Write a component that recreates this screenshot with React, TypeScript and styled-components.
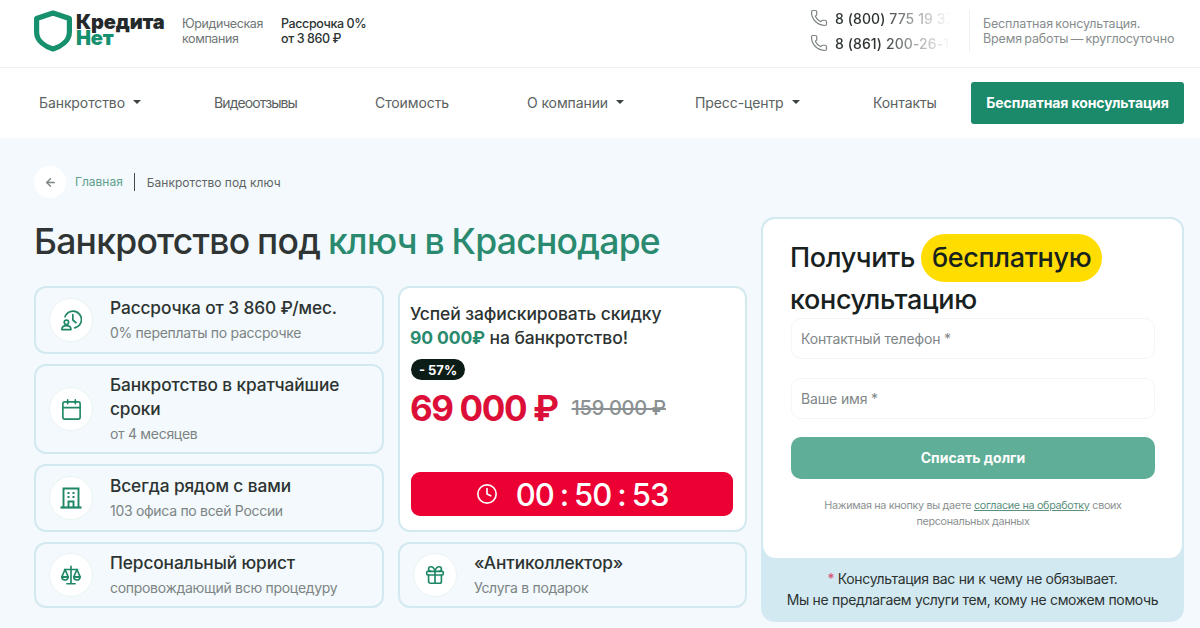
import React from "react";
import styled, { createGlobalStyle } from "styled-components";
import { Calendar, Gift, Clock, Phone, ArrowLeft } from "lucide-react";

const Global = createGlobalStyle`
  html, body { margin: 0; padding: 0; height: 628px; overflow: hidden; background: #fff; }
  * { box-sizing: border-box; }
  body { font-family: Inter, "Liberation Sans", sans-serif; color: #2c3331; }
`;

const Page = styled.div`width: 1200px; height: 628px; overflow: hidden; display: flex; flex-direction: column;`;

const TopBar = styled.header`
  height: 68px; flex: none; display: flex; align-items: center; padding: 0 30px 6px 34px;
  border-bottom: 1px solid #eef1f2;
`;
const Logo = styled.div`width: 148px; display: flex; align-items: center; gap: 4px; flex: none;`;
const LogoWord = styled.div`
  display: flex; flex-direction: column; font-weight: 900; font-size: 20px; line-height: 16px; letter-spacing: -0.15px; color: #24292a;
  margin-top: -1px;
`;
const LogoGreen = styled.span`color: #16906e; font-size: 20px;`;
const Blurb = styled.div<{ $w: number; $dark?: boolean }>`
  width: ${p => p.$w}px; flex: none; font-size: 12.5px; line-height: 15px; letter-spacing: -0.4px; color: ${p => (p.$dark ? "#2c3331" : "#6f7676")};
  font-weight: ${p => (p.$dark ? 500 : 400)}; white-space: nowrap;
`;
const TopSpacer = styled.div`flex: 1;`;
const Phones = styled.div`width: 159px; flex: none; display: flex; flex-direction: column; gap: 5px;`;
const PhoneRow = styled.div`display: flex; align-items: center; gap: 7px; height: 20px; color: #7d8383;`;
const PhoneNum = styled.span`
  font-size: 14px; font-weight: 500; white-space: nowrap; width: 116px; color: #2c3331; letter-spacing: 0.1px;
  -webkit-mask-image: linear-gradient(90deg, #000 40%, rgba(0,0,0,.5) 65%, transparent 100%);
  mask-image: linear-gradient(90deg, #000 40%, rgba(0,0,0,.5) 65%, transparent 100%);
`;
const WorkTime = styled.div`
  border-left: 1px solid #eef1f2; height: 42px; padding-left: 13px; width: 201px; flex: none; font-size: 12.5px; line-height: 15px; color: #878d8d;
  letter-spacing: -0.15px; word-spacing: -1px; white-space: nowrap; display: flex; flex-direction: column; justify-content: center;
`;

const Nav = styled.nav`
  height: 70px; flex: none; display: flex; align-items: center; padding: 0 16px 0 39px;
`;
const NavItem = styled.a<{ $w: number; $tight?: boolean }>`
  width: ${p => p.$w}px; flex: none; font-size: 14px; letter-spacing: ${p => (p.$tight ? "-0.9px" : "-0.1px")}; color: #5a6161; display: flex; align-items: center; gap: 8px; white-space: nowrap;
  padding-bottom: 2px;
`;
const Caret = styled.span`
  width: 0; height: 0; border-left: 4px solid transparent; border-right: 4px solid transparent; border-top: 4px solid #3c4242;
`;
const NavButton = styled.button`
  width: 213px; height: 42px; border: 0; border-radius: 3px; background: #1a8a6a; color: #fff; font: 700 14px Inter, sans-serif; letter-spacing: -0.1px; flex: none; padding: 0 0 1px;
`;

const Main = styled.main`
  flex: 1; background: #f3f9fc; padding: 28px 16px 0 34px;
`;
const Crumbs = styled.div`display: flex; align-items: center; height: 32px; margin-bottom: 19px;`;
const Back = styled.span`
  width: 32px; height: 32px; border-radius: 50%; background: #fff; display: flex; align-items: center; justify-content: center; color: #7b8282; margin-right: 9px;
`;
const CrumbLink = styled.span`font-size: 12px; color: #5fa08c; padding-right: 11px; border-right: 1px solid #454b4b; line-height: 18px;`;
const CrumbNow = styled.span`font-size: 12px; color: #5f6565; padding-left: 12px;`;

const Columns = styled.div`display: flex; gap: 14px; align-items: flex-start;`;
const LeftCol = styled.div`width: 713px; flex: none;`;
const Title = styled.h1`
  margin: 0 0 18px; font-size: 35.5px; line-height: 50px; font-weight: 500; color: #2f3534; letter-spacing: -0.75px; word-spacing: -1px; white-space: nowrap; height: 51px;
`;
const Green = styled.span`color: #2a8a6f;`;
const Grid = styled.div`display: grid; grid-template-columns: 350px 349px; column-gap: 14px; align-items: start;`;
const Stack = styled.div`display: flex; flex-direction: column; gap: 10px;`;
const Card = styled.div<{ $h: number }>`
  height: ${p => p.$h}px; border: 2px solid #d3e9f0; border-radius: 12px; display: flex; align-items: center; padding-left: 13px; gap: 17px;
`;
const IconCircle = styled.span`
  width: 44px; height: 44px; flex: none; border-radius: 50%; background: #fff; border: 1px solid #e9f5f3; color: #1f8767;
  display: flex; align-items: center; justify-content: center;
`;
const CardBody = styled.div`display: flex; flex-direction: column; margin-top: -2px;`;
const CardTitle = styled.div`font-size: 17.3px; line-height: 24px; font-weight: 500; color: #2c3331; letter-spacing: -0.1px;`;
const CardSub = styled.div`font-size: 14px; line-height: 20px; margin-top: 3px; color: #7c8484; letter-spacing: -0.3px;`;

const Promo = styled.div`
  height: 246px; border: 2px solid #d3e9f0; border-radius: 12px; background: #fff; padding: 14px 12px 14px 11px; display: flex; flex-direction: column;
`;
const PromoText = styled.div`font-size: 17.5px; line-height: 24px; font-weight: 500; color: #2c3331; letter-spacing: -0.1px; margin-left: -1px;`;
const PromoGreen = styled.span`color: #2a8a6f; font-weight: 700;`;
const Badge = styled.span`
  align-self: flex-start; margin-top: 9px; height: 21px; width: 54px; border-radius: 11px; background: #0c1c17; color: #fff; font-size: 13px; font-weight: 700;
  display: flex; align-items: center; justify-content: center;
`;
const PriceRow = styled.div`display: flex; align-items: center; gap: 14px; margin-top: 7px; height: 42px; margin-left: -1px;`;
const Price = styled.span`font-size: 35px; font-weight: 700; color: #dc0f38; white-space: nowrap; letter-spacing: -1.4px;`;
const OldPrice = styled.s`font-size: 20px; font-weight: 500; color: #8b9092; white-space: nowrap; letter-spacing: -0.3px;`;
const Timer = styled.div`
  margin-top: auto; height: 44px; background: #ec0033; border-radius: 9px; color: #fff; display: flex; align-items: center; justify-content: center; gap: 18px;
  font-size: 31px; font-weight: 500; letter-spacing: -1px; word-spacing: -1.25px;
`;

const FormCol = styled.div`width: 423px; flex: none; background: #d3e9f2; border-radius: 14px; height: 405px; margin-top: 0;`;
const FormCard = styled.div`
  height: 341px; background: #fff; border: 2px solid #d3e9f2; border-bottom: 0; border-radius: 14px; padding: 15px 27px 0 28px; display: flex; flex-direction: column;
`;
const FormTitle = styled.div`font-size: 27px; line-height: 36px; font-weight: 500; color: #17211e; letter-spacing: -0.35px; word-spacing: -1px; height: 84px; margin-left: -1px;`;
const Pill = styled.span`
  display: inline-block; background: #ffdd00; border-radius: 24px; padding: 4px 11px; line-height: 40px;
`;
const FieldWrap = styled.div`display: flex; flex-direction: column; gap: 19px; margin-bottom: 18px;`;
const Field = styled.div`
  height: 41px; border: 1px solid #f3f5f6; border-radius: 10px; padding-left: 9px; display: flex; align-items: center; font-size: 14px; color: #808687; letter-spacing: -0.15px;
`;
const Submit = styled.button`
  height: 42px; flex: none; border: 0; border-radius: 10px; background: #5fae97; color: #fff; font: 700 14px Inter, sans-serif; padding: 0 0 2px;
`;
const Legal = styled.div`margin-top: 19px; text-align: center; font-size: 10.8px; line-height: 16px; color: #8d9293; padding: 0 20px; letter-spacing: -0.33px;`;
const LegalLink = styled.span`color: #5d8f80; text-decoration: underline;`;
const FormNote = styled.div`
  height: 64px; display: flex; flex-direction: column; align-items: center; justify-content: center; font-size: 14px; line-height: 21px; color: #2c3331; letter-spacing: -0.33px; padding-bottom: 2px;
`;
const Star = styled.span`color: #d8476a;`;

function ClockUser() {
  return (
    <svg width="22" height="22" viewBox="0 0 24 24" fill="none" stroke="currentColor" strokeWidth="1.8" strokeLinecap="round" strokeLinejoin="round">
      <path d="M5.5 8.5A9.2 9.2 0 1 1 16 20.6" />
      <path d="M14 6v6l3.5 3" />
      <circle cx="7" cy="14.5" r="2.4" />
      <path d="M2 22.5c0-2.8 2.2-4.3 5-4.3s5 1.5 5 4.3z" />
    </svg>
  );
}
function Office() {
  return (
    <svg width="24" height="24" viewBox="0 0 24 24" fill="none" stroke="currentColor" strokeWidth="1.9" strokeLinejoin="miter">
      <path d="M4.5 21V2.5h15V21" />
      <path d="M1.5 21.5h21" strokeWidth="2.2" />
      <path d="M9.5 21v-5.5h5V21" />
      <path d="M8.5 7h2M13.5 7h2M8.5 11h2M13.5 11h2" strokeWidth="2" />
    </svg>
  );
}
function Balance() {
  return (
    <svg width="22" height="22" viewBox="0 0 24 24" fill="none" stroke="currentColor" strokeWidth="1.8" strokeLinejoin="round" strokeLinecap="round">
      <path d="M12 2.5V21.5M7.5 21.5h9M5 6h14" />
      <path d="M5.5 6 2 14h7z" />
      <path d="M18.5 6 15 14h7z" />
      <path d="M2 14a3.5 3.5 0 0 0 7 0z" />
      <path d="M15 14a3.5 3.5 0 0 0 7 0z" />
    </svg>
  );
}
function Shield() {
  return (
    <svg width="38" height="42" viewBox="0 0 38 42" fill="none" stroke="#17906e" strokeWidth="5.2" strokeLinejoin="round">
      <path d="M19 3 L35.4 8.5 V22 C35.4 31 27 36.5 19 39 C11 36.5 2.6 31 2.6 22 V8.5 Z" />
    </svg>
  );
}

export default function App() {
  return (
    <Page>
      <Global />
      <TopBar>
        <Logo>
          <Shield />
          <LogoWord>
            <span>Кредита</span>
            <LogoGreen>Нет</LogoGreen>
          </LogoWord>
        </Logo>
        <Blurb $w={99}>Юридическая<br />компания</Blurb>
        <Blurb $w={100} $dark>Рассрочка 0%<br />от 3 860 ₽</Blurb>
        <TopSpacer />
        <Phones>
          <PhoneRow><Phone size={18} strokeWidth={1.6} /><PhoneNum>8 (800) 775 19 37</PhoneNum></PhoneRow>
          <PhoneRow><Phone size={18} strokeWidth={1.6} /><PhoneNum>8 (861) 200-26-17</PhoneNum></PhoneRow>
        </Phones>
        <WorkTime>Бесплатная консультация.<br />Время работы — круглосуточно</WorkTime>
      </TopBar>
      <Nav>
        <NavItem $w={175}>Банкротство <Caret /></NavItem>
        <NavItem $w={161} $tight>Видеоотзывы</NavItem>
        <NavItem $w={152}>Стоимость</NavItem>
        <NavItem $w={168}>О компании <Caret /></NavItem>
        <NavItem $w={178}>Пресс-центр <Caret /></NavItem>
        <NavItem $w={98}>Контакты</NavItem>
        <NavButton>Бесплатная консультация</NavButton>
      </Nav>
      <Main>
        <Crumbs>
          <Back><ArrowLeft size={13} strokeWidth={2.4} /></Back>
          <CrumbLink>Главная</CrumbLink>
          <CrumbNow>Банкротство под ключ</CrumbNow>
        </Crumbs>
        <Columns>
          <LeftCol>
            <Title>Банкротство под <Green>ключ в Краснодаре</Green></Title>
            <Grid>
              <Stack>
                <Card $h={68}>
                  <IconCircle><ClockUser /></IconCircle>
                  <CardBody><CardTitle>Рассрочка от 3 860 ₽/мес.</CardTitle><CardSub>0% переплаты по рассрочке</CardSub></CardBody>
                </Card>
                <Card $h={90}>
                  <IconCircle><Calendar size={23} strokeWidth={1.7} /></IconCircle>
                  <CardBody><CardTitle>Банкротство в кратчайшие сроки</CardTitle><CardSub>от 4 месяцев</CardSub></CardBody>
                </Card>
                <Card $h={68}>
                  <IconCircle><Office /></IconCircle>
                  <CardBody><CardTitle>Всегда рядом с вами</CardTitle><CardSub>103 офиса по всей России</CardSub></CardBody>
                </Card>
                <Card $h={66}>
                  <IconCircle><Balance /></IconCircle>
                  <CardBody><CardTitle>Персональный юрист</CardTitle><CardSub>сопровождающий всю процедуру</CardSub></CardBody>
                </Card>
              </Stack>
              <Stack>
                <Promo>
                  <PromoText>Успей зафискировать скидку<br /><PromoGreen>90 000₽</PromoGreen> на банкротство!</PromoText>
                  <Badge>- 57%</Badge>
                  <PriceRow><Price>69 000 ₽</Price><OldPrice>159 000 ₽</OldPrice></PriceRow>
                  <Timer><Clock size={22} strokeWidth={1.8} /><span>00 : 50 : 53</span></Timer>
                </Promo>
                <Card $h={66}>
                  <IconCircle><Gift size={22} strokeWidth={1.8} /></IconCircle>
                  <CardBody><CardTitle>«Антиколлектор»</CardTitle><CardSub>Услуга в подарок</CardSub></CardBody>
                </Card>
              </Stack>
            </Grid>
          </LeftCol>
          <FormCol>
            <FormCard>
              <FormTitle>Получить <Pill>бесплатную</Pill><br />консультацию</FormTitle>
              <FieldWrap>
                <Field>Контактный телефон *</Field>
                <Field>Ваше имя *</Field>
              </FieldWrap>
              <Submit>Списать долги</Submit>
              <Legal>Нажимая на кнопку вы даете <LegalLink>согласие на обработку</LegalLink> своих персональных данных</Legal>
            </FormCard>
            <FormNote>
              <span><Star>*</Star> Консультация вас ни к чему не обязывает.</span>
              <span>Мы не предлагаем услуги тем, кому не сможем помочь</span>
            </FormNote>
          </FormCol>
        </Columns>
      </Main>
    </Page>
  );
}
